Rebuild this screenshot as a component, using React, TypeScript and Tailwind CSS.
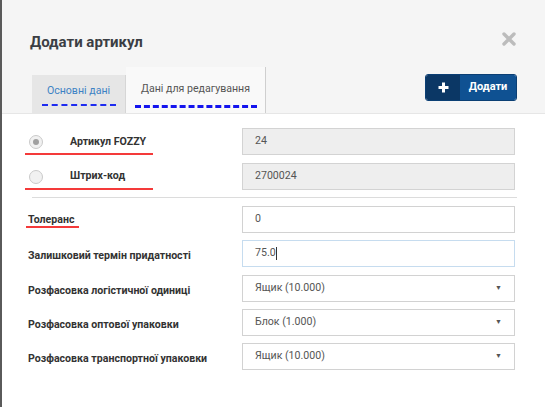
import React from 'react';

const FONT = { fontFamily: 'Roboto, "Noto Sans", "Liberation Sans", sans-serif' };

const INPUT_CLS = 'w-[273px] h-[27px] px-3 pb-[1px] border text-[10.6px] text-[#555] flex items-center';
const LABEL_CLS = 'text-[10.6px] font-bold text-[#333]';

function Radio({ checked }: { checked?: boolean }) {
  return (
    <span className="w-[14px] h-[14px] rounded-full border border-[#cacaca] bg-[#f1f1f1] flex items-center justify-center">
      {checked && <span className="w-[6px] h-[6px] rounded-full bg-[#a0a0a0]" />}
    </span>
  );
}

function Row({ label, children, className = '' }: { label: React.ReactNode; children: React.ReactNode; className?: string }) {
  return (
    <div className={`flex items-center justify-between pr-[30px] ${className}`}>
      <div className="flex-1">{label}</div>
      {children}
    </div>
  );
}

function Select({ value }: { value: string }) {
  return (
    <div className={`${INPUT_CLS} bg-white border-[#d2d2d2] justify-between`}>
      <span>{value}</span>
      <span className="text-[7px] text-[#555]">▼</span>
    </div>
  );
}

export default function App() {
  return (
    <div className="w-[545px] h-[407px] flex bg-white overflow-hidden" style={FONT}>
      <div className="w-[2px] bg-[#5a5a5a]" />
      <div className="flex-1 flex flex-col">
        {/* header */}
        <div className="bg-[#f5f5f5] h-[114px] border-b border-[#e6e6e6] flex flex-col">
          <div className="flex items-center justify-between pl-[28px] pr-[28px] pt-[31px]">
            <h1 className="text-[15px] font-bold text-[#3b3e44]">Додати артикул</h1>
            <svg width="14" height="14" viewBox="0 0 14 14" className="mr-[1px] -mt-[6px]">
              <path d="M2 2 L12 12 M12 2 L2 12" stroke="#bcbcbc" strokeWidth="3.4" strokeLinecap="round" />
            </svg>
          </div>
          <div className="flex items-end justify-between mt-auto pl-[30px] pr-[28px]">
            <div className="flex items-end">
              <div className="w-[94px] h-[38px] bg-[#e6e6e6] border-r border-[#d6d6d6] flex flex-col items-center pt-[8px]">
                <span className="text-[10.6px] text-[#3d82c4]">Основні дані</span>
                <span className="mt-[5px] w-[74px] border-t-[2px] border-dashed border-[#1e2cf0]" />
              </div>
              <div className="w-[140px] h-[46px] bg-[#f9f9f9] border-r border-[#cfcfcf] flex flex-col items-center pt-[14px]">
                <span className="text-[10.6px] text-[#555]">Дані для редагування</span>
                <span className="mt-[8px] w-[122px] border-t-[3px] border-dashed border-[#1414ee]" />
              </div>
            </div>
            <div className="flex h-[27px] mb-[12px] rounded-[3px] overflow-hidden border border-[#0b3f74]">
              <div className="w-[34px] bg-[#0b3765] flex items-center justify-center">
                <svg width="11" height="11" viewBox="0 0 11 11">
                  <path d="M5.5 0.5 V10.5 M0.5 5.5 H10.5" stroke="white" strokeWidth="3" />
                </svg>
              </div>
              <div className="w-[56px] bg-[#0f5192] flex items-center justify-center text-white text-[11px] font-bold">
                Додати
              </div>
            </div>
          </div>
        </div>

        {/* body */}
        <div className="flex flex-col pl-[26px] pt-[14px]">
          <Row label={
            <div className="relative flex items-center h-[27px] pl-[1px]">
              <Radio checked />
              <span className={`ml-[27px] ${LABEL_CLS}`}>Артикул FOZZY</span>
              <span className="absolute left-[-3px] top-[25px] w-[128px] h-[2px] bg-[#f43a3a]" />
            </div>
          }>
            <div className={`${INPUT_CLS} bg-[#eeeeee] border-[#d3d3d3]`}>24</div>
          </Row>
          <Row className="mt-[8px]" label={
            <div className="relative flex items-center h-[27px] pl-[1px]">
              <Radio />
              <span className={`ml-[27px] -mt-[2px] ${LABEL_CLS}`}>Штрих-код</span>
              <span className="absolute left-[-3px] top-[25px] w-[128px] h-[2px] bg-[#f43a3a]" />
            </div>
          }>
            <div className={`${INPUT_CLS} bg-[#eeeeee] border-[#d3d3d3]`}>2700024</div>
          </Row>
          <div className="mt-[7px] ml-[4px] mr-[28px] border-t border-[#dcdcdc]" />
          <Row className="mt-[8px]" label={
            <div className="relative flex items-center h-[27px]">
              <span className={LABEL_CLS}>Толеранс</span>
              <span className="absolute left-[-2px] top-[20px] w-[53px] h-[2px] bg-[#f43a3a]" />
            </div>
          }>
            <div className={`${INPUT_CLS} bg-white border-[#d2d2d2]`}>0</div>
          </Row>
          <Row className="mt-[7px]" label={<span className={LABEL_CLS}>Залишковий термін придатності</span>}>
            <div className={`${INPUT_CLS} bg-white border-[#c6dcef]`}>
              75.0<span className="w-px h-[13px] bg-[#333]" />
            </div>
          </Row>
          <Row className="mt-[8px]" label={<span className={LABEL_CLS}>Розфасовка логістичної одиниці</span>}>
            <Select value="Ящик (10.000)" />
          </Row>
          <Row className="mt-[7px]" label={<span className={LABEL_CLS}>Розфасовка оптової упаковки</span>}>
            <Select value="Блок (1.000)" />
          </Row>
          <Row className="mt-[7px]" label={<span className={LABEL_CLS}>Розфасовка транспортної упаковки</span>}>
            <Select value="Ящик (10.000)" />
          </Row>
        </div>
      </div>
    </div>
  );
}
